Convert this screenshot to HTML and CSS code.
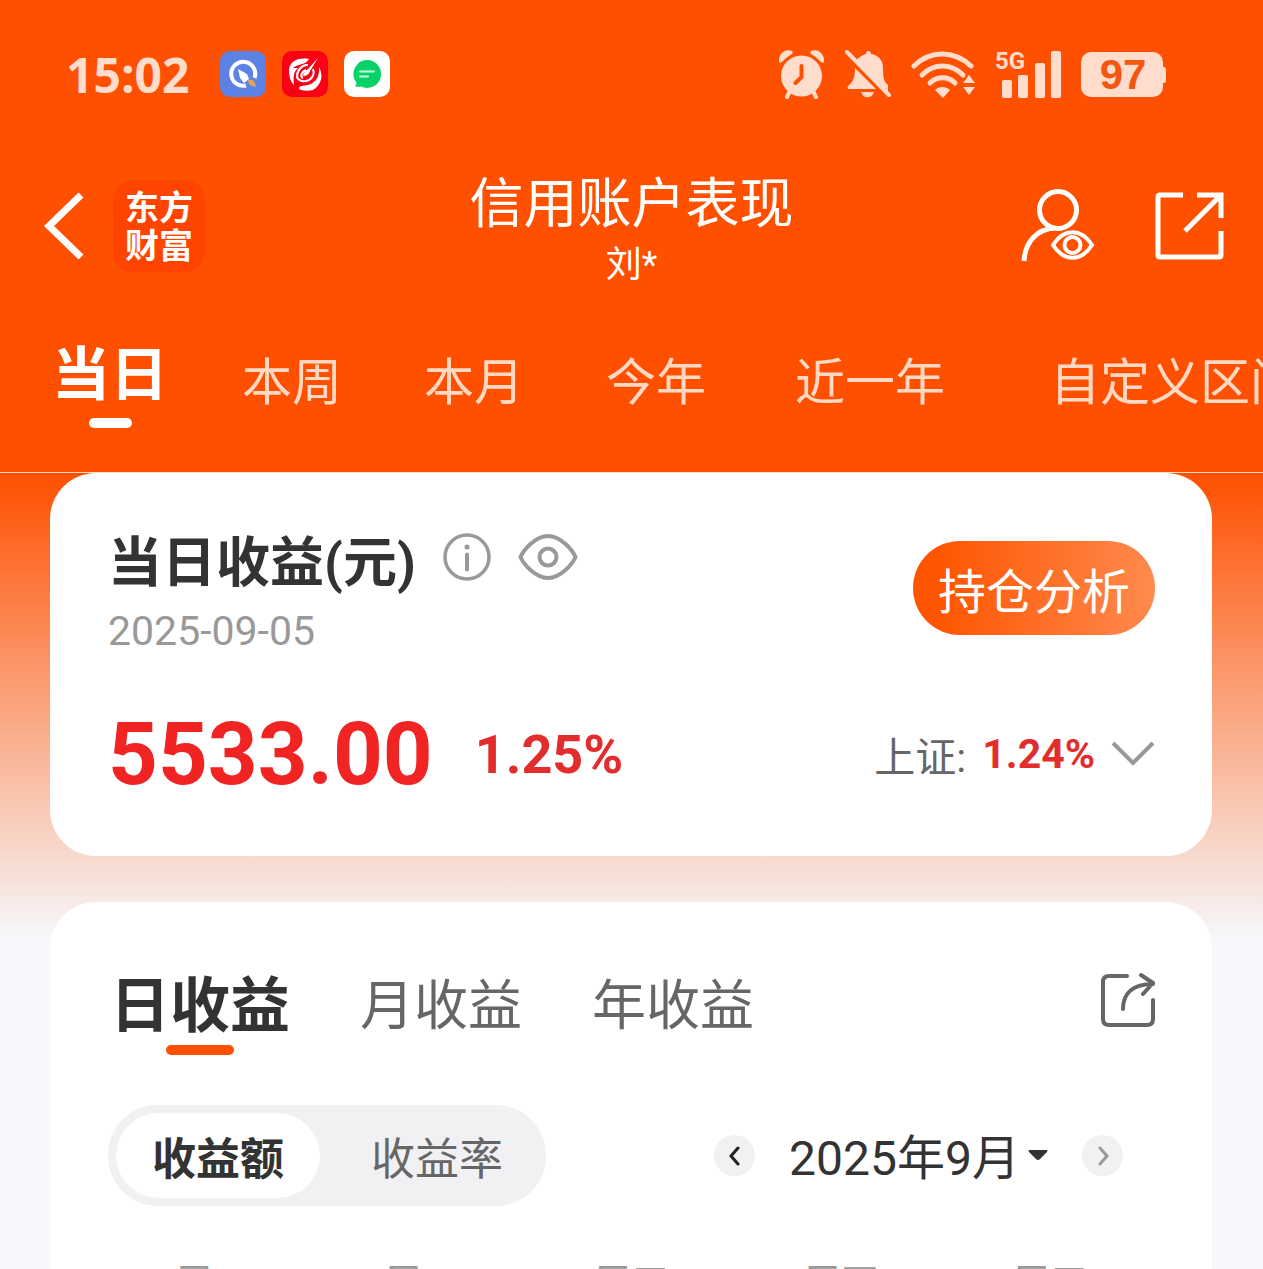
FILE: index.html
```html
<!DOCTYPE html>
<html lang="zh-CN">
<head>
    <meta charset="UTF-8">
    <title>信用账户表现</title>
    <meta name="viewport" content="width=device-width, initial-scale=1.0">
    <link rel="stylesheet" href="styles.css">
</head>
<body>
    <div class="app">
        <header class="header">
            <div class="status-bar">
                <span class="time">15:02</span>
                <div class="notices">
                    <svg width="46" height="46" viewBox="0 0 46 46">
                        <rect width="46" height="46" rx="10" fill="#5b82e4"/>
                        <path d="M34.500 27A12 12 0 1 0 26 34.500" fill="none" stroke="#fff" stroke-width="4"/>
                        <path d="M18 18l9 5 2 5-5 4-4-5z" fill="#fff"/>
                        <path d="M28 29c4-2 7 1 8 7-5-1-8-3-8-7z" fill="#e0a653"/>
                    </svg>
                    <svg width="46" height="46" viewBox="0 0 46 46">
                        <rect width="46" height="46" rx="10" fill="#fa0016"/>
                        <path d="M27 8C15 6 7 11 7 20c0 6 2 11 5 14-1-9 0-14 4-17l-5 0c4-4 13-3 16-9z" fill="#fff"/>
                        <path d="M37 16c5 9 2 18-6 23-5 1-11 1-14-1 0-4 5-3 9-4 8-2 12-9 11-18z" fill="#fff"/>
                        <path d="M26 14c-6-1-11 6-11 11 0 4 5 6 9 5 6-1 9-7 7-12" fill="none" stroke="#fff" stroke-width="2"/>
                        <path d="M24 19c-5 2-6 7-3 8" fill="none" stroke="#fff" stroke-width="2"/>
                        <path d="M36 7L26 18c-3 2-5 4-5 7 4 0 6-2 7-5z" fill="#fff"/>
                    </svg>
                    <svg width="46" height="46" viewBox="0 0 46 46">
                        <rect width="46" height="46" rx="10" fill="#fff"/>
                        <path d="M23 9a14 14 0 1 1-6 26.600C15 36 13 36 11 35c1-1 2-2 1-4A14 14 0 0 1 23 9z" fill="#05d268"/>
                        <path d="M16 20.500h14M16 25.500h8" stroke="#c9ffe0" stroke-width="2" stroke-linecap="round"/>
                    </svg>
                </div>
                <div class="system-icons">
                    <svg width="47" height="50" viewBox="0 0 47 50">
                        <g fill="#ffdccb">
                            <circle cx="23.500" cy="27" r="20.500"/>
                            <path d="M1 13C0 5 7-1 14 2c1 1 1 2 0 3C10 7 7 10 4 13c-1 1-3 1-3 0zM46 13C47 5 40-1 33 2c-1 1-1 2 0 3 4 2 7 5 10 8 1 1 3 1 3 0z"/>
                        </g>
                        <path d="M12 42l-3 6M35 42l3 6" stroke="#ffdccb" stroke-width="4" stroke-linecap="round"/>
                        <path d="M23.500 17v11l-6 6" fill="none" stroke="#ff5000" stroke-width="4" stroke-linecap="round" stroke-linejoin="round"/>
                    </svg>
                    <svg width="46" height="50" viewBox="0 0 46 50">
                        <path d="M10 18L32 40H5c-3 0-3-2-1-4 5-4 6-9 6-18zM11 12c3-4 6-6 10-7 0-4 5-4 5 0 8 1 12 7 12 14 0 10 1 14 5 17v7zM16 43h13c-2 7-11 7-13 0z" fill="#ffdccb"/>
                        <path d="M0 7L36 43" stroke="#ff5000" stroke-width="3"/>
                        <path d="M2 3L44 46" stroke="#ffdccb" stroke-width="4" stroke-linecap="round"/>
                    </svg>
                    <svg width="64" height="50" viewBox="0 0 64 50">
                        <g fill="none" stroke="#ffdccb" stroke-width="5" stroke-linecap="round">
                            <path d="M3 17C19 1 43 1 60 17"/>
                            <path d="M11 26c12-12 29-12 41 0"/>
                            <path d="M19 34c7-7 18-7 25 0"/>
                        </g>
                        <path d="M24 41c4-4 11-4 15 0l-7 8zM52 34l6-8 6 8zM52 38h12l-6 8z" fill="#ffdccb"/>
                    </svg>
                    <svg width="66" height="50" viewBox="0 0 66 50">
                        <g fill="#ffdccb">
                            <text class="network" x="0" y="20">5G</text>
                            <rect x="7" y="31" width="10" height="18" rx="2"/>
                            <rect x="23" y="26" width="10" height="23" rx="2"/>
                            <rect x="40" y="14" width="10" height="35" rx="2"/>
                            <rect x="56" y="2" width="10" height="47" rx="2"/>
                        </g>
                    </svg>
                    <svg width="85" height="50" viewBox="0 0 85 50">
                        <rect y="3" width="82" height="45" rx="10" fill="#ffdccb"/>
                        <rect x="80" y="18" width="5" height="16" rx="2" fill="#ffdccb"/>
                        <text class="battery" x="42" y="40">97</text>
                    </svg>
                </div>
            </div>
            <div class="title-bar">
                <div class="title-left">
                    <button class="icon-btn" aria-label="返回">
                        <svg width="45" height="70" viewBox="0 0 45 70">
                            <path d="M42 4L10 35l32 31" fill="none" stroke="#fff" stroke-width="7"/>
                        </svg>
                    </button>
                    <div class="brand">东方<br>财富</div>
                </div>
                <div class="title-text">
                    <h1>信用账户表现</h1>
                    <p>刘*</p>
                </div>
                <div class="title-right">
                    <button class="icon-btn" aria-label="账户">
                        <svg width="74" height="74" viewBox="0 0 74 74" fill="none" stroke="#fff" stroke-width="5">
                            <circle cx="37" cy="21" r="18.500"/>
                            <path d="M3 72C4 54 15 40 34 39"/>
                            <path d="M32 56c11-17 28-17 39 0-11 17-28 17-39 0z" stroke-width="4"/>
                            <circle cx="51.500" cy="56" r="8" stroke-width="4"/>
                        </svg>
                    </button>
                    <button class="icon-btn" aria-label="分享">
                        <svg width="70" height="70" viewBox="0 0 70 70" fill="none" stroke="#fff" stroke-width="5">
                            <path d="M29 4H6q-2 0-2 2v58q0 2 2 2h59q2 0 2-2V40"/>
                            <path d="M43 4h24v23M66 5L31 40"/>
                        </svg>
                    </button>
                </div>
            </div>
            <nav class="range-tabs">
                <a href="#" class="active">当日</a>
                <a href="#">本周</a>
                <a href="#">本月</a>
                <a href="#">今年</a>
                <a href="#" class="medium">近一年</a>
                <a href="#" class="wide">自定义区间</a>
            </nav>
        </header>

        <main class="content">
            <section class="card summary">
                <div class="summary-top">
                    <div>
                        <div class="summary-title">
                            <h2>当日收益(元)</h2>
                            <button class="icon-btn" aria-label="说明">
                                <svg width="48" height="48" viewBox="0 0 48 48">
                                    <circle cx="24" cy="24" r="22" fill="none" stroke="#999" stroke-width="3.500"/>
                                    <circle cx="24" cy="14" r="2.500" fill="#999"/>
                                    <path d="M24 21.500v15" stroke="#999" stroke-width="4" stroke-linecap="round"/>
                                </svg>
                            </button>
                            <button class="icon-btn" aria-label="隐藏金额">
                                <svg width="60" height="48" viewBox="0 0 60 48" fill="none" stroke="#999" stroke-width="4">
                                    <path d="M2.500 24C6 16 18 3 30 3s24 13 27.500 21C54 32 42 45 30 45S6 32 2.500 24z"/>
                                    <circle cx="30" cy="24" r="8.500"/>
                                </svg>
                            </button>
                        </div>
                        <p class="date">2025-09-05</p>
                    </div>
                    <button class="analysis-btn">持仓分析</button>
                </div>
                <div class="summary-values">
                    <span class="amount">5533.00</span>
                    <span class="rate">1.25%</span>
                    <button class="index-btn">
                        <span>上证:</span>
                        <strong>1.24%</strong>
                        <svg width="44" height="26" viewBox="0 0 44 26">
                            <path d="M2 2l20 20L42 2" fill="none" stroke="#999" stroke-width="4"/>
                        </svg>
                    </button>
                </div>
            </section>

            <section class="card calendar">
                <div class="profit-tabs">
                    <a href="#" class="active">日收益</a>
                    <a href="#">月收益</a>
                    <a href="#">年收益</a>
                    <button class="icon-btn" aria-label="分享收益">
                        <svg width="56" height="56" viewBox="0 0 56 56" fill="none" stroke="#666" stroke-width="4" stroke-linecap="round">
                            <path d="M28 4H10Q4 4 4 10v37q0 6 6 6h38q6 0 6-6V28"/>
                            <path d="M24 37c0-16 10-25 30-25M42 3l12 8-10 11" stroke-linejoin="round"/>
                        </svg>
                    </button>
                </div>
                <div class="filters">
                    <div class="switch">
                        <button class="selected">收益额</button>
                        <button>收益率</button>
                    </div>
                    <div class="month-picker">
                        <button class="arrow" aria-label="上个月">
                            <svg width="12" height="20" viewBox="0 0 12 20">
                                <path d="M9 2L2 10l7 8" fill="none" stroke="#222" stroke-width="3" stroke-linecap="round"/>
                            </svg>
                        </button>
                        <label class="month">
                            <select aria-label="月份">
                                <option>2025年9月</option>
                            </select>
                            <svg width="20" height="11" viewBox="0 0 20 11">
                                <path d="M1 0h18q1 1 0 2l-7 7q-2 2-4 0L1 2Q0 1 1 0z" fill="#333"/>
                            </svg>
                        </label>
                        <button class="arrow" aria-label="下个月">
                            <svg width="12" height="20" viewBox="0 0 12 20">
                                <path d="M3 2l7 8-7 8" fill="none" stroke="#999" stroke-width="3" stroke-linecap="round"/>
                            </svg>
                        </button>
                    </div>
                </div>
                <div class="weekdays">
                    <span>周一</span>
                    <span>周二</span>
                    <span>周三</span>
                    <span>周四</span>
                    <span>周五</span>
                </div>
            </section>
        </main>
    </div>
</body>
</html>
```
FILE: styles.css
```css
* { box-sizing: border-box; }
body {
    margin: 0;
    font-family: Roboto, "Noto Sans CJK SC", sans-serif;
    background: #f6f8fb;
    color: #333;
}
h1, h2, p { margin: 0; font-weight: 400; }
a { text-decoration: none; color: inherit; }
svg { display: block; flex-shrink: 0; }
button {
    border: none;
    background: none;
    padding: 0;
    font-family: inherit;
    color: inherit;
    cursor: pointer;
}
.app {
    height: 100vh;
    overflow: hidden;
}

/* Header */
.header {
    background: #ff5000;
    color: #fff;
    border-bottom: 1px solid #ffd9c0;
}
.status-bar {
    display: flex;
    align-items: center;
    height: 148px;
    padding: 0 97px 0 66px;
}
.time {
    font-family: "Open Sans", sans-serif;
    font-size: 48px;
    font-weight: 700;
    color: #ffdccb;
}
.notices {
    display: flex;
    gap: 16px;
    margin-left: 31px;
}
.system-icons {
    display: flex;
    gap: 20px;
    margin-left: auto;
}
.network {
    font-family: Roboto, sans-serif;
    font-size: 24px;
    font-weight: 700;
}
.battery {
    font-family: "Liberation Sans", sans-serif;
    font-size: 42px;
    font-weight: 700;
    text-anchor: middle;
    fill: #f2560f;
}
.title-bar {
    display: grid;
    grid-template-columns: 1fr auto 1fr;
    align-items: center;
    height: 156px;
    padding: 0 39px;
}
.title-left,
.title-right {
    display: flex;
    align-items: center;
    gap: 29px;
}
.title-right {
    justify-content: flex-end;
    gap: 59px;
}
.brand {
    width: 92px;
    height: 92px;
    padding-top: 9px;
    border-radius: 20px;
    background: #ff4400;
    font-size: 34px;
    line-height: 38px;
    font-weight: 700;
    text-align: center;
}
.title-text {
    padding-top: 14px;
    text-align: center;
}
.title-text h1 {
    font-size: 54px;
    line-height: 64px;
}
.title-text p {
    font-size: 36px;
    line-height: 56px;
}
.range-tabs {
    display: flex;
    height: 168px;
    padding-left: 19px;
    overflow: hidden;
}
.range-tabs a {
    flex: 0 0 182px;
    padding-top: 42px;
    font-size: 50px;
    line-height: 74px;
    text-align: center;
    white-space: nowrap;
    color: #ffd9c4;
}
.range-tabs .medium { flex-basis: 246px; }
.range-tabs .wide { flex-basis: 364px; }
.range-tabs .active {
    padding-top: 34px;
    font-size: 58px;
    font-weight: 700;
    color: #fff;
}
.range-tabs .active::after,
.profit-tabs .active::after {
    content: "";
    display: block;
    width: 43px;
    height: 10px;
    margin: 6px auto 0;
    border-radius: 5px;
    background: #fff;
}

/* Cards */
.content {
    padding: 0 51px 0 50px;
    background: linear-gradient(#ff5000, #f6f8fb 467px);
}
.card {
    padding: 0 57px 0 58px;
    border-radius: 46px;
    background: #fff;
}
.summary {
    padding-top: 48px;
    padding-bottom: 48px;
    margin-bottom: 46px;
}
.summary-top {
    display: flex;
    justify-content: space-between;
    align-items: center;
}
.summary-title {
    display: flex;
    align-items: flex-start;
    gap: 27px;
}
.summary-title h2 {
    font-size: 54px;
    line-height: 86px;
    font-weight: 700;
}
.summary-title .icon-btn { margin-top: 12px; }
.date {
    font-size: 41px;
    line-height: 48px;
    color: #999;
}
.analysis-btn {
    width: 242px;
    height: 94px;
    border-radius: 47px;
    background: linear-gradient(90deg, #ff5500 10%, #ff8a4f);
    font-size: 48px;
    color: #fff;
}
.summary-values {
    display: flex;
    align-items: center;
    margin-top: 45px;
    color: #f12424;
}
.amount {
    font-size: 87px;
    line-height: 108px;
    font-weight: 700;
}
.rate {
    margin-left: 42px;
    font-size: 54px;
    font-weight: 700;
    color: #e32d2d;
}
.index-btn {
    display: flex;
    align-items: center;
    gap: 16px;
    margin-left: auto;
    font-size: 41px;
    color: #666;
}
.index-btn strong { color: #e32d2d; }

/* Profit calendar */
.profit-tabs {
    display: flex;
    align-items: flex-start;
    gap: 70px;
    padding: 62px 0 0 2px;
}
.profit-tabs a {
    font-size: 54px;
    line-height: 86px;
    color: #666;
}
.profit-tabs .active {
    font-size: 60px;
    font-weight: 700;
    color: #333;
}
.profit-tabs .active::after {
    width: 68px;
    margin-top: -5px;
    background: #ff5000;
}
.profit-tabs .icon-btn {
    margin: 8px 0 0 auto;
}
.filters {
    display: flex;
    justify-content: space-between;
    align-items: center;
    margin-top: 50px;
    padding-right: 32px;
}
.switch {
    display: flex;
    gap: 8px;
    padding: 8px 0 8px 8px;
    border-radius: 50px;
    background: #f1f1f4;
}
.switch button {
    width: 218px;
    height: 85px;
    border-radius: 43px;
    font-size: 44px;
    color: #666;
}
.switch .selected {
    width: 204px;
    background: #fff;
    font-weight: 700;
    color: #333;
}
.month-picker {
    display: flex;
    align-items: center;
    gap: 34px;
}
.arrow {
    display: flex;
    align-items: center;
    justify-content: center;
    width: 41px;
    height: 41px;
    border-radius: 50%;
    background: #f1f1f4;
}
.month {
    display: flex;
    align-items: center;
    gap: 8px;
}
.month select {
    appearance: none;
    border: none;
    padding: 6px 0 0;
    background: none;
    font-family: inherit;
    font-size: 48px;
    color: #333;
}
.weekdays {
    display: grid;
    grid-template-columns: repeat(5, 1fr);
    margin-top: 49px;
    font-size: 38px;
    line-height: 56px;
    text-align: center;
    color: #999;
}
```
